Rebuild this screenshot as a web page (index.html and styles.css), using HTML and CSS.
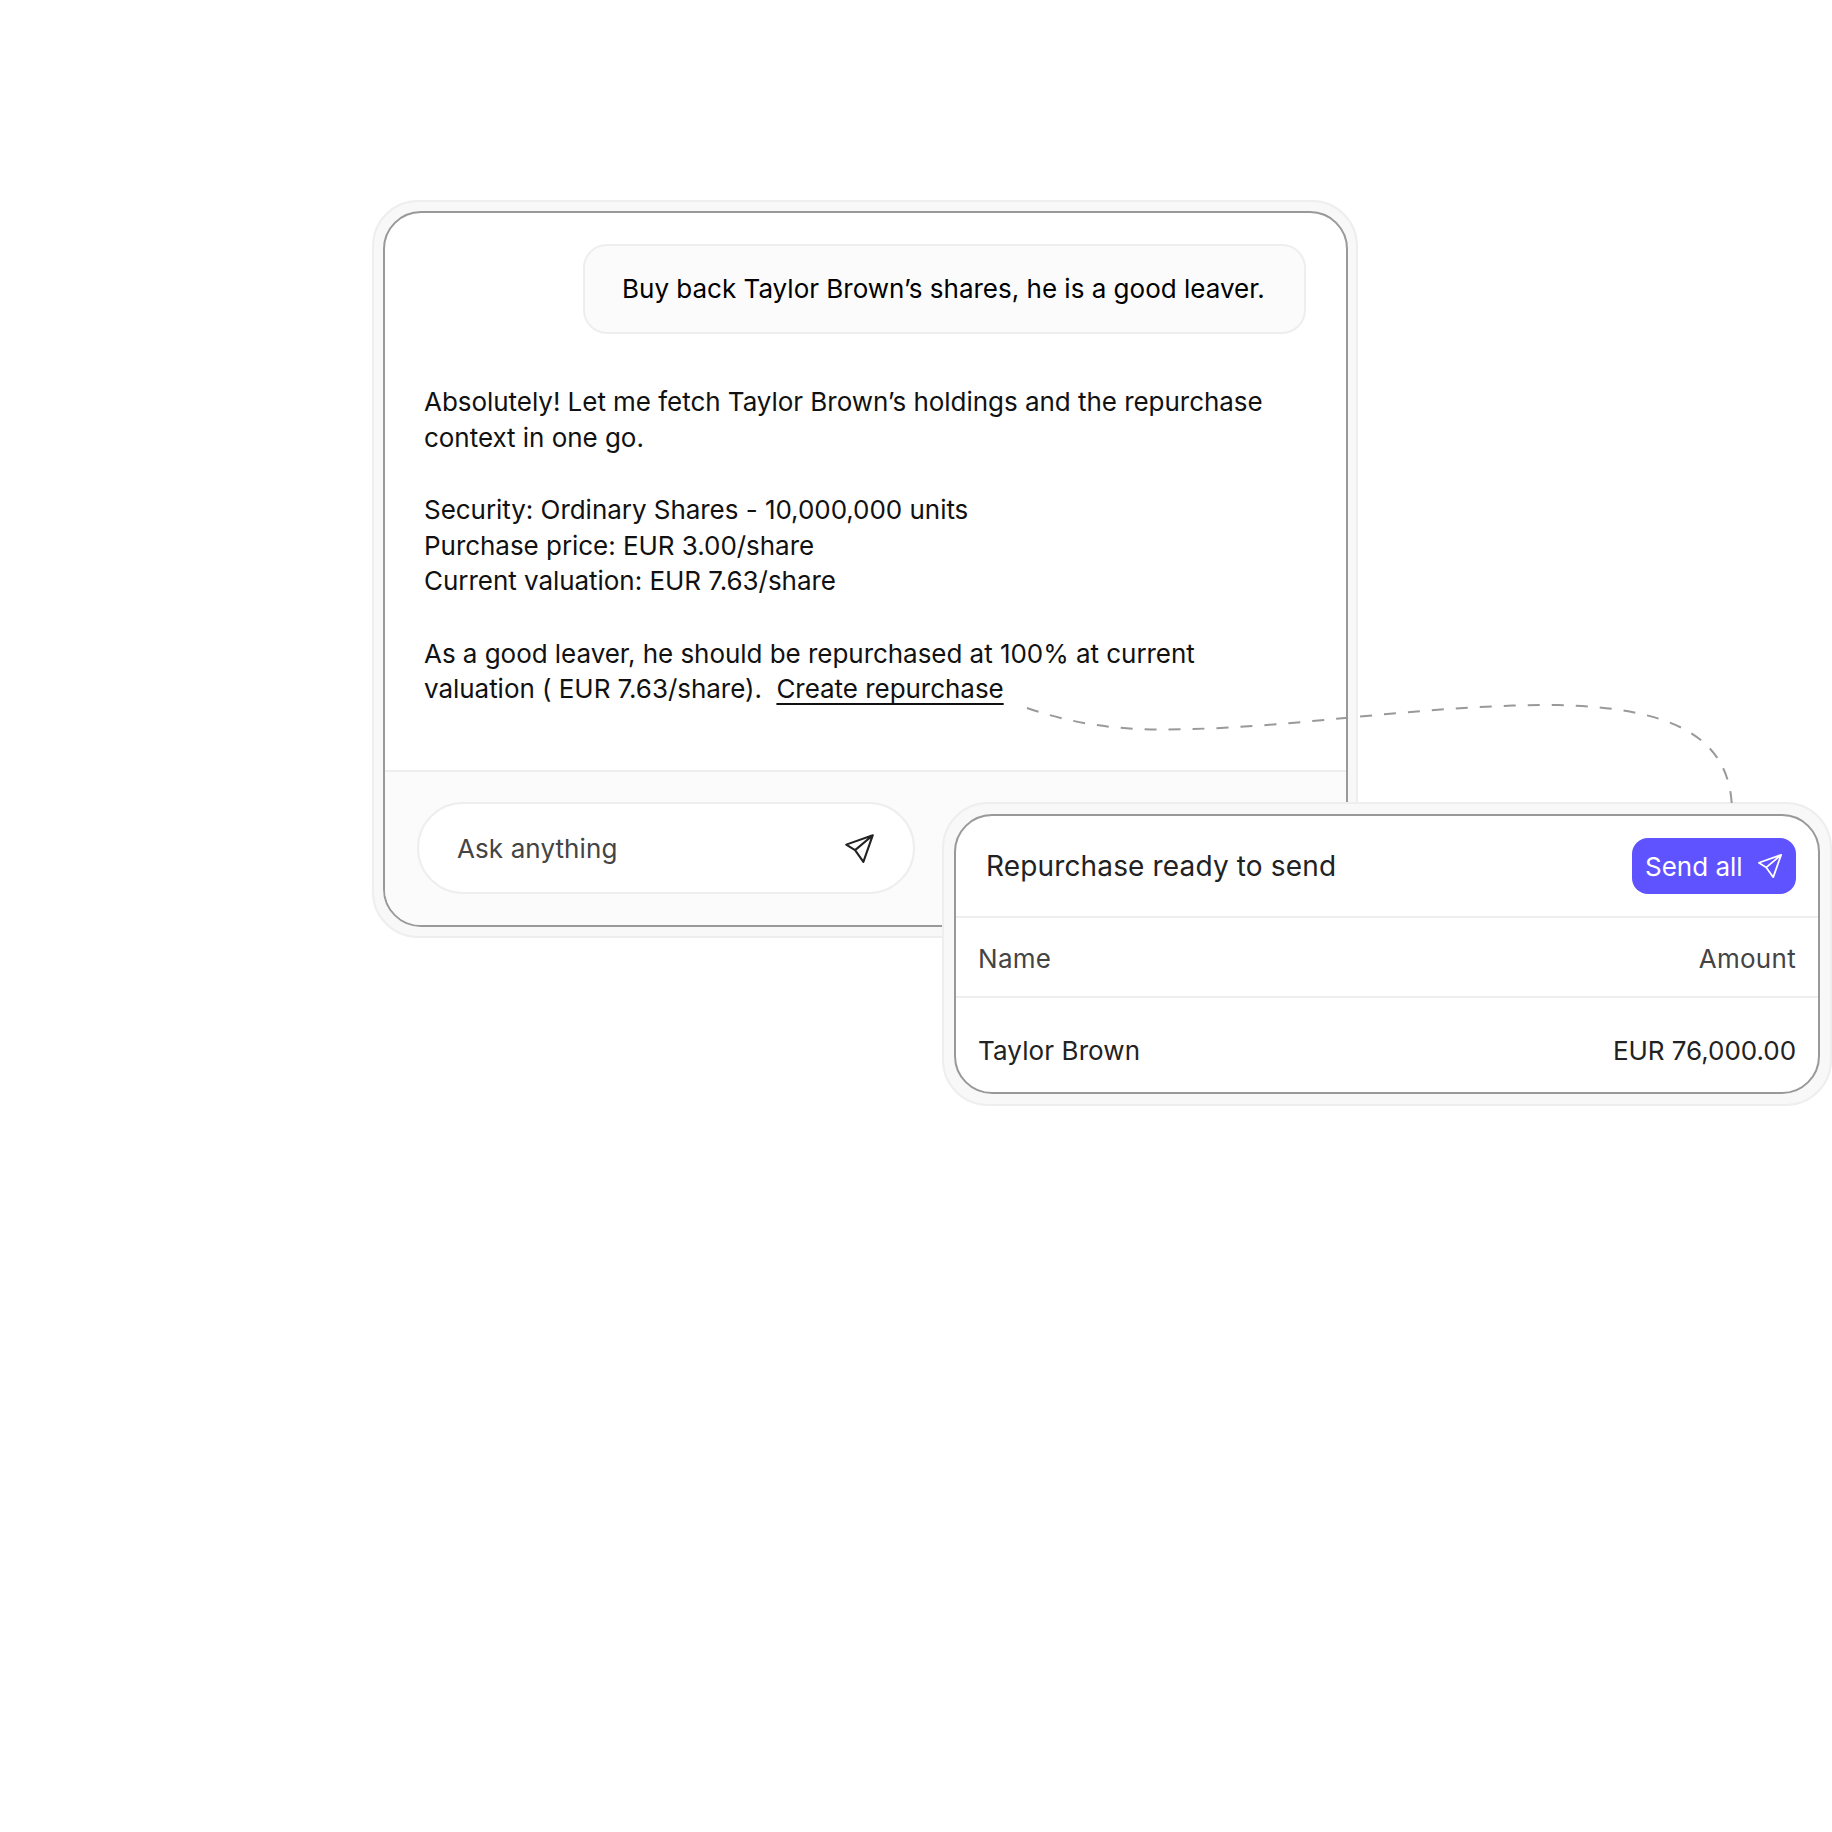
FILE: index.html
```html
<!DOCTYPE html>
<html>
  <head>
    <meta charset="UTF-8">
    <title>Repurchase chat</title>
    <link rel="stylesheet" href="styles.css">
  </head>
  <body>
    <div class="stage">
      <div class="shell chat-shell">
        <div class="panel chat">
          <div class="chat-body">
            <div class="bubble">Buy back Taylor Brown’s shares, he is a good leaver.</div>
            <div class="message">
              <p>Absolutely! Let me fetch Taylor Brown’s holdings and the repurchase context in one go.</p>
              <p>Security: Ordinary Shares - 10,000,000 units<br>Purchase price: EUR 3.00/share<br>Current valuation: EUR 7.63/share</p>
              <p>As a good leaver, he should be repurchased at 100% at current valuation ( EUR 7.63/share).&nbsp; <a class="link" href="#">Create repurchase</a></p>
            </div>
          </div>
          <div class="chat-footer">
            <div class="ask">
              <span>Ask anything</span>
              <svg class="plane" viewBox="0 0 28 28"><path d="M26 2 L2 10.500 L10 15.500 L17.500 26 Z M26 2 L10 15.500"/></svg>
            </div>
          </div>
        </div>
      </div>

      <div class="shell card-shell">
        <div class="panel card">
          <div class="card-head">
            <span class="card-title">Repurchase ready to send</span>
            <button class="send">
              Send all
              <svg class="plane" viewBox="0 0 28 28"><path d="M26 2 L2 10.500 L10 15.500 L17.500 26 Z M26 2 L10 15.500"/></svg>
            </button>
          </div>
          <div class="row row-head"><span>Name</span><span>Amount</span></div>
          <div class="row row-item"><span class="name">Taylor Brown</span><span>EUR 76,000.00</span></div>
        </div>
      </div>

      <!-- dashed line from the link to the card -->
      <svg class="connector" viewBox="0 0 1832 1832">
        <path d="M1027 708 C1085 728 1135 731 1190 729 C1300 727 1430 704 1558 705 C1670 708 1732 735 1732 812"/>
      </svg>
    </div>
  </body>
</html>
```

FILE: styles.css
```css
* {
  box-sizing: border-box;
}

body {
  margin: 0;
  background-color: #fff;
  font-family: Inter, "Liberation Sans", sans-serif;
  font-size: 26px;
  line-height: 35.8px;
  letter-spacing: -0.04px;
  color: #111;
}

.stage {
  position: relative;
  width: 1832px;
  height: 1832px;
  padding: 200px 0 0 372px;
}

.shell {
  padding: 9px;
  background-color: #f8f8f8;
  border: 2px solid #eee;
  border-radius: 46px;
}

.panel {
  height: 100%;
  background-color: #fff;
  border: 2px solid #999;
  border-radius: 38px;
  overflow: hidden;
}

/* chat */
.chat-shell {
  width: 986px;
  height: 738px;
  padding-right: 8px;
}

.chat {
  display: flex;
  flex-direction: column;
}

.chat-body {
  flex: 1;
  display: flex;
  flex-direction: column;
  padding: 31px 40px 0 39px;
}

.bubble {
  align-self: flex-end;
  width: 723px;
  padding: 25px 0 25px 37px;
  background-color: #fbfbfb;
  border: 2px solid #eee;
  border-radius: 24px;
  white-space: nowrap;
  letter-spacing: 0;
  color: #000;
}

.message {
  margin-top: 50px;
}

.message p {
  margin: 0 0 36.4px;
}

.link {
  color: inherit;
  text-decoration: underline;
  text-underline-offset: 5px;
}

.chat-footer {
  padding: 30px 32px 31px;
  background-color: #fbfbfb;
  border-top: 2px solid #eee;
}

.ask {
  display: flex;
  align-items: center;
  justify-content: space-between;
  width: 498px;
  height: 92px;
  padding: 2px 38px 0 38px;
  background-color: #fff;
  border: 2px solid #eee;
  border-radius: 46px;
  letter-spacing: 0.1px;
  color: #444;
}

.plane {
  flex: none;
  fill: none;
  stroke: #222;
  stroke-linejoin: round;
}

.ask .plane {
  width: 31px;
  height: 31px;
  margin-top: -2px;
  stroke-width: 1.9;
}

/* repurchase card */
.card-shell {
  position: absolute;
  left: 942px;
  top: 802px;
  width: 890px;
  height: 304px;
  padding: 10px;
}

.card-head {
  display: flex;
  align-items: center;
  justify-content: space-between;
  height: 102px;
  padding: 0 22px 0 30px;
  border-bottom: 2px solid #eee;
}

.card-title {
  padding-top: 2px;
  font-size: 28px;
  letter-spacing: 0.15px;
  color: #222;
}

.send {
  display: flex;
  align-items: center;
  justify-content: space-between;
  width: 164px;
  height: 56px;
  padding: 0 13px;
  background-color: #5f52ff;
  border: none;
  border-radius: 16px;
  font-family: inherit;
  font-size: 26px;
  color: #fff;
}

.send .plane {
  width: 26px;
  height: 26px;
  stroke: #fff;
  stroke-width: 1.9;
}

.row {
  display: flex;
  align-items: center;
  justify-content: space-between;
  padding: 0 22px;
  color: #222;
}

.row-head {
  height: 80px;
  padding-top: 4px;
  border-bottom: 2px solid #eee;
  letter-spacing: 0.3px;
  color: #444;
}

.row-item {
  height: 94px;
  padding-top: 12px;
}

.name {
  letter-spacing: 0.1px;
}

.connector {
  position: absolute;
  left: 0;
  top: 0;
  width: 1832px;
  height: 1832px;
  fill: none;
  stroke: #999;
  stroke-width: 2;
  stroke-dasharray: 12 12;
  pointer-events: none;
}
```
